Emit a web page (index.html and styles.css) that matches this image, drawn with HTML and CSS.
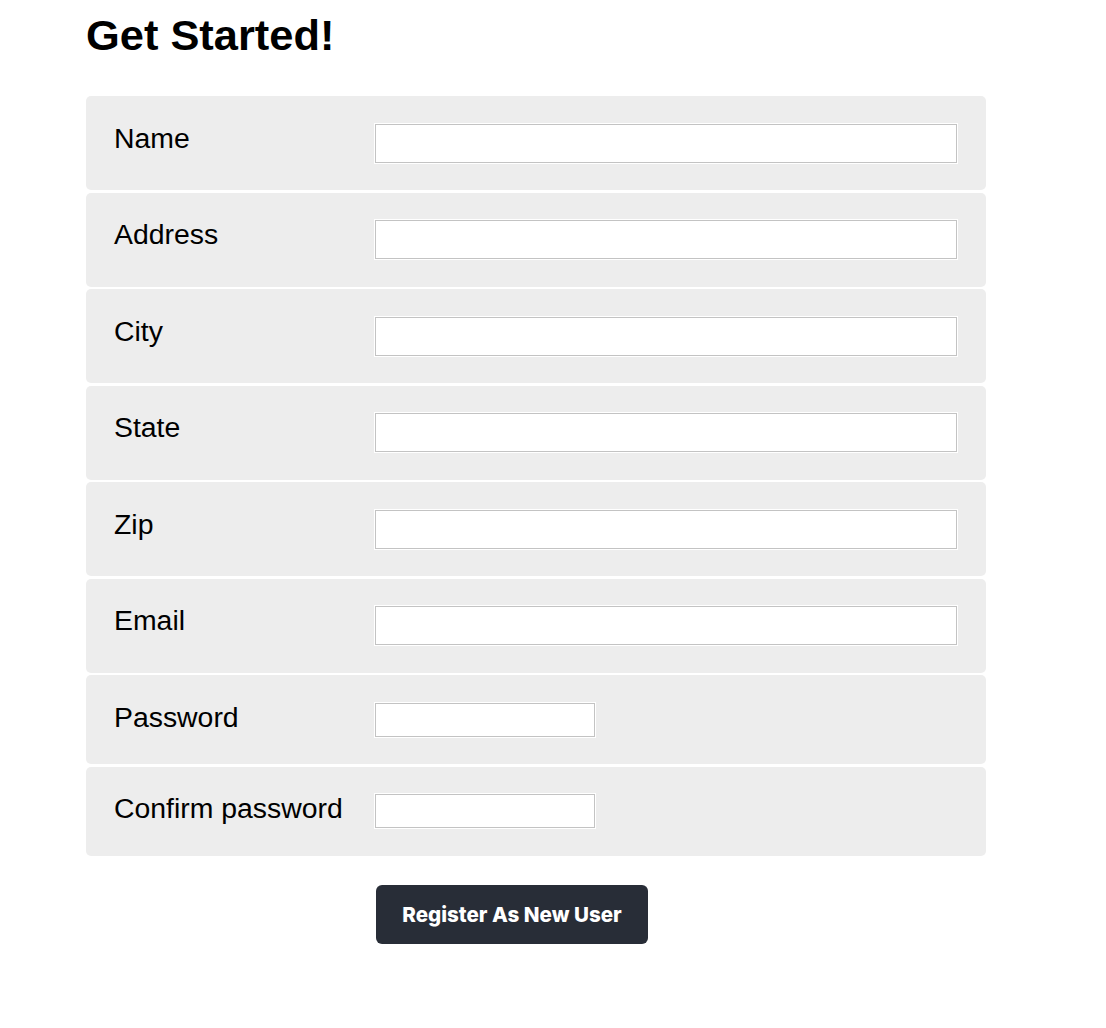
FILE: index.html
```html
<!DOCTYPE html>
<html lang="en">
<head>
<meta charset="utf-8">
<title>Get Started!</title>
<link rel="stylesheet" href="styles.css">
</head>
<body>
<main class="page">
  <h1 class="title">Get Started!</h1>
  <form class="form">
    <div class="rows">
      <div class="row"><label class="label" for="name">Name</label><input class="field" id="name" type="text"></div>
      <div class="row"><label class="label" for="address">Address</label><input class="field" id="address" type="text"></div>
      <div class="row"><label class="label" for="city">City</label><input class="field" id="city" type="text"></div>
      <div class="row"><label class="label" for="state">State</label><input class="field" id="state" type="text"></div>
      <div class="row"><label class="label" for="zip">Zip</label><input class="field" id="zip" type="text"></div>
      <div class="row"><label class="label" for="email">Email</label><input class="field" id="email" type="email"></div>
      <div class="row row-short"><label class="label" for="pw">Password</label><input class="field field-short" id="pw" type="password"></div>
      <div class="row row-short"><label class="label" for="pw2">Confirm password</label><input class="field field-short" id="pw2" type="password"></div>
    </div>
    <div class="actions">
      <button class="btn" type="button">Register As New User</button>
    </div>
  </form>
</main>
</body>
</html>
```
FILE: styles.css
```css
html, body {
  margin: 0;
  padding: 0;
  background: #ffffff;
}
body {
  font-family: "Liberation Sans", Arial, Helvetica, sans-serif;
  color: #000;
}
.page {
  width: 900px;
  margin-left: 86px;
}
.title {
  margin: 11px 0 0;
  font-size: 43.4px;
  font-weight: 700;
  line-height: normal;
}
.form {
  margin-top: 36px;
}
.rows {
  display: flex;
  flex-direction: column;
  gap: 2.5px;
}
.row {
  display: flex;
  align-items: flex-start;
  background: #ededed;
  border-radius: 5px;
  padding: 27.5px 29px 27.5px 28px;
}
.label {
  width: 261px;
  flex: none;
  font-size: 28.4px;
  line-height: 1;
  white-space: nowrap;
}
.field {
  flex: 1;
  box-sizing: border-box;
  height: 39px;
  margin: 0;
  border: 1px solid #c3c3c3;
  background: #fff;
  box-shadow: 0 0 0 1px #fff;
  outline: none;
  padding: 0 6px;
}
.field-short {
  flex: none;
  width: 220px;
  height: 34px;
}
.actions {
  padding-left: 290px;
  margin-top: 29px;
}
.btn {
  width: 272px;
  height: 59px;
  padding: 0;
  border: none;
  border-radius: 6px;
  background: #282d37;
  color: #fff;
  font-family: Inter, "Liberation Sans", sans-serif;
  font-weight: 800;
  font-size: 20.6px;
  cursor: pointer;
}
```
